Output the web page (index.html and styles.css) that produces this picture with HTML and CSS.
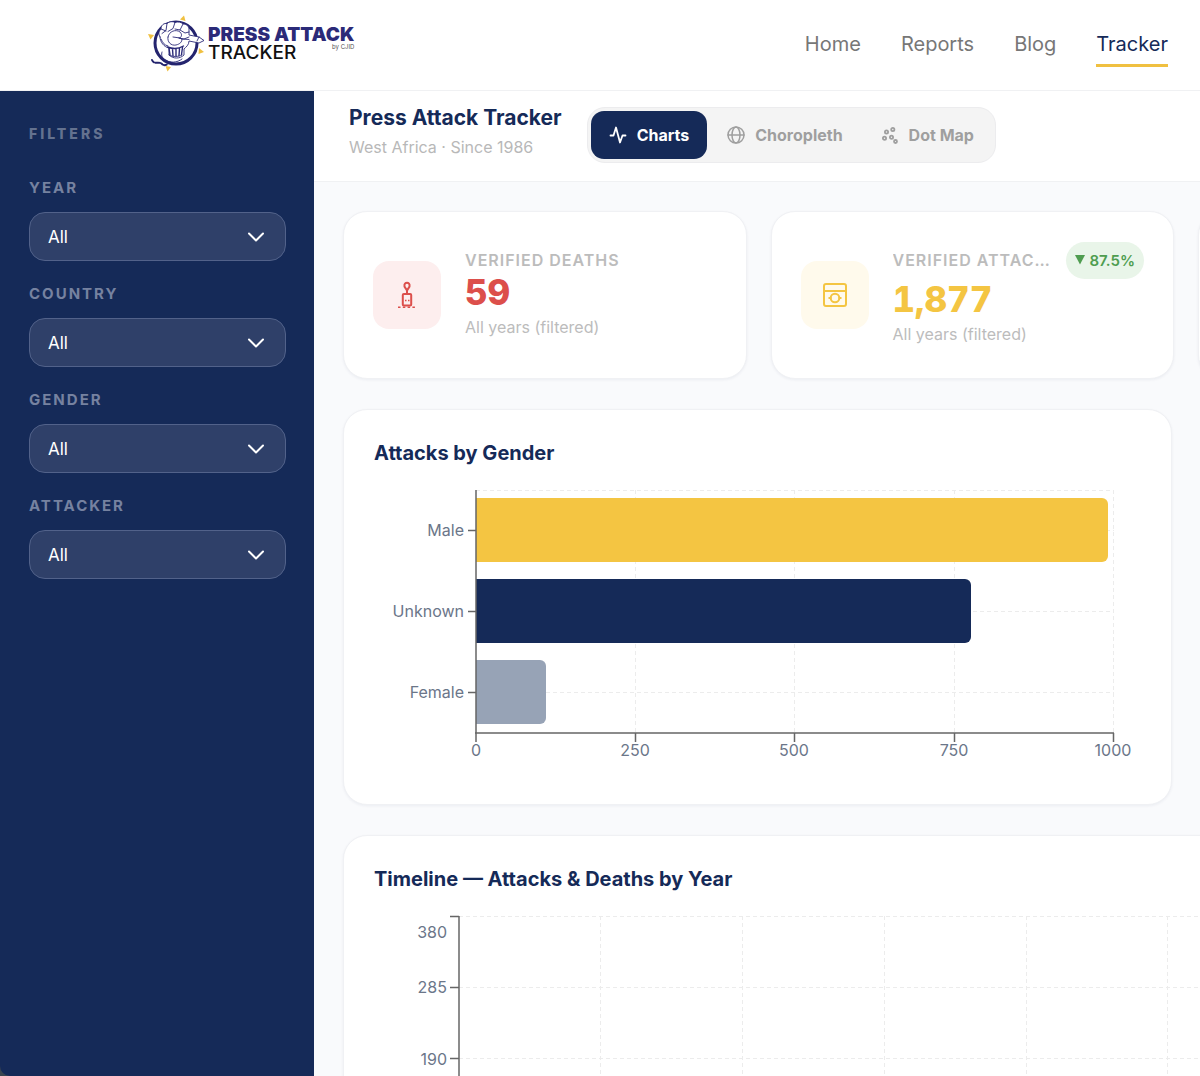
FILE: index.html
```html
<!DOCTYPE html>
<html lang="en">
<head>
    <meta charset="UTF-8">
    <meta name="viewport" content="width=device-width, initial-scale=1.0">
    <title>Press Attack Tracker</title>
    <link rel="stylesheet" href="styles.css">
</head>
<body>

<header class="site-header">
    <a class="logo" href="#" aria-label="Press Attack Tracker">
        <svg class="logo-mark" viewBox="0 0 58 58" width="58" height="58" fill="none" stroke-linecap="round" stroke-linejoin="round">
            <g fill="#f0c040">
                <path d="M36 .5l1.500 5.500l-5.500-1.500z"/>
                <path d="M0 19l6 1l-3.500 4.500z"/>
                <path d="M51 33l5 4l-5.500 2z"/>
                <path d="M17.500 51l5.500 1l-3.500 4.500z"/>
            </g>
            <circle cx="28" cy="28" r="21" stroke="#24246e" stroke-width="3"/>
            <g stroke="#2b2a78" stroke-width=".9">
                <path fill="#fff" d="M12 22c-2-3-1-6 1-8c0-4 3-6 6-5.500c2-2 6-2.500 8-1c3-1 6-.5 8 1.500c3 0 6 2 6 5v6l10 2l5 3.500l-5 2.500l-10-2c0 4-3 6-5 8v6c-4 4-11 4-15 0v-7c-5-1-9-6-9-11z"/>
                <path d="M19 8.500l-1 7l-4 3M27 7.500l-2 6l-5 3M35 9l-3 6l-5-1M13 14l5 2M32 15l5 3l4-1M51 22l-2 4"/>
                <path d="M20 22c1-6 8-8 12-5c2 2 2 4 0 6l-7-1M20 22c-1 5 3 9 8 8c4-1 6-3 6-6l-3-1M34 24l7 .5M13 24c2 4 3 6 7 7M31 23l5 1l5-2"/>
                <path stroke-width="1.400" d="M19.500 32c5 2 11 2 16-1M21 33l1 7M24.500 34l.5 7M28 34v7M31.500 33.500l-.5 7M34.500 32.500l-1 7"/>
                <path d="M21 40c4 2 9 2 13 0M14 37c-1 3 0 6 3 8c5 3 12 3 17-1"/>
            </g>
            <path stroke="#24246e" stroke-width="2" stroke-dasharray="3 1.500" d="M4 45c2 5 7 1 10 4c2 2 4 1 6 0"/>
        </svg>
        <span class="logo-text">
            <span class="logo-press">PRESS ATTACK</span>
            <span class="logo-row">
                <span class="logo-tracker">TRACKER</span>
                <small class="logo-by">by CJID</small>
            </span>
        </span>
    </a>
    <nav class="site-nav">
        <a href="#">Home</a>
        <a href="#">Reports</a>
        <a href="#">Blog</a>
        <a class="active" href="#">Tracker</a>
    </nav>
</header>

<div class="layout">
    <aside class="sidebar">
        <h2>Filters</h2>

        <div class="filter">
            <label for="year">Year</label>
            <div class="select-wrap">
                <select id="year"><option>All</option></select>
                <svg viewBox="0 0 18 18" width="18" height="18"><path d="M2 5.500l7 7l7-7"/></svg>
            </div>
        </div>
        <div class="filter">
            <label for="country">Country</label>
            <div class="select-wrap">
                <select id="country"><option>All</option></select>
                <svg viewBox="0 0 18 18" width="18" height="18"><path d="M2 5.500l7 7l7-7"/></svg>
            </div>
        </div>
        <div class="filter">
            <label for="gender">Gender</label>
            <div class="select-wrap">
                <select id="gender"><option>All</option></select>
                <svg viewBox="0 0 18 18" width="18" height="18"><path d="M2 5.500l7 7l7-7"/></svg>
            </div>
        </div>
        <div class="filter">
            <label for="attacker">Attacker</label>
            <div class="select-wrap">
                <select id="attacker"><option>All</option></select>
                <svg viewBox="0 0 18 18" width="18" height="18"><path d="M2 5.500l7 7l7-7"/></svg>
            </div>
        </div>
    </aside>

    <main class="main">
        <div class="topbar">
            <div class="topbar-title">
                <h1>Press Attack Tracker</h1>
                <p>West Africa · Since 1986</p>
            </div>
            <div class="tabs">
                <button class="tab active" type="button">
                    <svg viewBox="0 0 18 18" width="18" height="18" stroke-width="1.800"><path d="M1.500 9.500h3l2.500-8l4 15l2.500-7h3"/></svg>
                    Charts
                </button>
                <button class="tab" type="button">
                    <svg viewBox="0 0 18 18" width="18" height="18" stroke-width="1.500"><circle cx="9" cy="9" r="8"/><ellipse cx="9" cy="9" rx="4" ry="8"/><path d="M1 9h16"/></svg>
                    Choropleth
                </button>
                <button class="tab" type="button">
                    <svg viewBox="0 0 18 18" width="18" height="18" stroke-width="1.800"><circle cx="5.500" cy="6" r="1.600"/><circle cx="11.800" cy="3.500" r="1.600"/><circle cx="3.500" cy="12.300" r="1.600"/><circle cx="10.500" cy="11.300" r="1.600"/><circle cx="14.500" cy="15.500" r="1.500"/></svg>
                    Dot Map
                </button>
            </div>
        </div>

        <div class="content">
            <section class="kpis">
                <article class="card kpi kpi-red">
                    <div class="kpi-icon">
                        <svg viewBox="0 0 28 28" width="28" height="28" fill="none" stroke="currentColor" stroke-width="2"><path d="M14 9.500l-2.500-4c-1-5 6-5 5 0zM14 9v4"/><rect x="9.800" y="13" width="8.400" height="11.500" rx="1"/><path stroke-width="1.300" stroke-dasharray="1.500 1.500" d="M12 19.500h5"/><path stroke-width="1.500" stroke-dasharray="2.500 2.300" d="M5 26.300h17"/></svg>
                    </div>
                    <div class="kpi-body">
                        <div class="kpi-head"><h3>Verified Deaths</h3></div>
                        <div class="kpi-value">59</div>
                        <p>All years (filtered)</p>
                    </div>
                </article>
                <article class="card kpi kpi-yellow">
                    <div class="kpi-icon">
                        <svg viewBox="0 0 28 28" width="28" height="28" fill="none" stroke="currentColor" stroke-width="2"><rect x="3" y="3" width="22" height="22" rx="2"/><path d="M3 10h22M7.500 17h3M17.500 17h3"/><circle cx="14" cy="17" r="4.300"/></svg>
                    </div>
                    <div class="kpi-body">
                        <div class="kpi-head">
                            <h3>Verified Attacks</h3>
                            <span class="badge"><svg viewBox="0 0 10 10" width="10" height="10"><path d="M0 0h10L5 9.500z" fill="currentColor"/></svg>87.5%</span>
                        </div>
                        <div class="kpi-value">1,877</div>
                        <p>All years (filtered)</p>
                    </div>
                </article>
                <article class="card"></article>
            </section>

            <section class="charts">
                <article class="card chart">
                    <h2>Attacks by Gender</h2>
                    <svg class="plot" width="766" height="294">
                        <g class="grid">
                            <path d="M102 8.500h638M102 48.500h638M102 129.500h638M102 210.500h638"/>
                            <path d="M261.500 8v243M420.500 8v243M580.500 8v243M739.500 8v243"/>
                        </g>
                        <path fill="#f4c542" d="M102 16h626a6 6 0 0 1 6 6v52a6 6 0 0 1-6 6h-626z"/>
                        <path fill="#152a58" d="M102 97h489a6 6 0 0 1 6 6v52a6 6 0 0 1-6 6h-489z"/>
                        <path fill="#97a3b6" d="M102 178h64a6 6 0 0 1 6 6v52a6 6 0 0 1-6 6h-64z"/>
                        <g class="axis">
                            <path d="M102 8v252M101 251h639"/>
                            <path d="M94 48.500h8M94 129.500h8M94 210.500h8"/>
                            <path d="M261.500 251v9M420.500 251v9M580.500 251v9M739.500 251v9"/>
                        </g>
                        <g class="ticks ticks-y">
                            <text x="90" y="54">Male</text>
                            <text x="90" y="135">Unknown</text>
                            <text x="90" y="216">Female</text>
                        </g>
                        <g class="ticks ticks-x">
                            <text x="102" y="274">0</text>
                            <text x="261" y="274">250</text>
                            <text x="420" y="274">500</text>
                            <text x="580" y="274">750</text>
                            <text x="739" y="274">1000</text>
                        </g>
                    </svg>
                </article>
            </section>

            <article class="card chart">
                <h2>Timeline — Attacks &amp; Deaths by Year</h2>
                <svg class="plot" width="1622" height="360">
                    <g class="grid">
                        <path d="M85 8.500h1500M85 79.500h1500M85 150.500h1500M85 221.500h1500"/>
                        <path d="M226.500 8v284M368.500 8v284M510.500 8v284M652.500 8v284M793.500 8v284"/>
                    </g>
                    <g class="axis">
                        <path d="M85 8v284"/>
                        <path d="M76 8.500h9M76 79.500h9M76 150.500h9M76 221.500h9"/>
                    </g>
                    <g class="ticks ticks-y">
                        <text x="73" y="30">380</text>
                        <text x="73" y="85">285</text>
                        <text x="73" y="157">190</text>
                    </g>
                </svg>
            </article>
        </div>
    </main>
</div>

</body>
</html>
```
FILE: styles.css
```css
* {
    box-sizing: border-box;
}

body {
    margin: 0;
    height: 100vh;
    display: flex;
    flex-direction: column;
    overflow: hidden;
    font-family: Inter, "Liberation Sans", sans-serif;
    font-size: 16px;
    color: #152a58;
    background-color: #fff;
}

h1, h2, h3, p {
    margin: 0;
}

/* Header */
.site-header {
    display: flex;
    justify-content: space-between;
    align-items: center;
    height: 91px;
    flex-shrink: 0;
    padding: 0 32px 2px 148px;
    border-bottom: 1px solid #f0f1f3;
}

.logo {
    display: flex;
    align-items: center;
    gap: 2px;
    text-decoration: none;
}

.logo-text {
    display: flex;
    flex-direction: column;
    font-size: 19px;
    line-height: 18px;
}

.logo-press {
    font-weight: 900;
    color: #2b2a78;
}

.logo-row {
    display: flex;
    justify-content: space-between;
    align-items: flex-start;
}

.logo-tracker {
    font-weight: 500;
    color: #111;
}

.logo-by {
    font-size: 6px;
    line-height: 6px;
    color: #555;
}

.site-nav {
    display: flex;
    gap: 40px;
}

.site-nav a {
    padding: 9px 0 6px;
    border-bottom: 3px solid transparent;
    font-size: 20px;
    line-height: 28px;
    color: #777;
    text-decoration: none;
}

.site-nav a.active {
    color: #152a58;
    border-bottom-color: #f0c040;
}

.layout {
    display: flex;
    flex: 1;
    min-height: 0;
    background-color: #3a4650;
}

/* Sidebar filters */
.sidebar {
    flex: 0 0 314px;
    padding: 33px 28px 33px 29px;
    background-color: #152a58;
    border-bottom-left-radius: 10px;
}

.sidebar h2 {
    margin-bottom: 34px;
    font-size: 14px;
    line-height: 20px;
    font-weight: 800;
    letter-spacing: 3px;
    text-transform: uppercase;
    color: #64728f;
}

.filter {
    margin-bottom: 23px;
}

.filter label {
    display: block;
    margin-bottom: 14px;
    font-size: 15px;
    line-height: 20px;
    font-weight: 700;
    letter-spacing: 2px;
    text-transform: uppercase;
    color: #7682a0;
}

.select-wrap {
    position: relative;
}

.select-wrap select {
    display: block;
    width: 100%;
    height: 49px;
    padding: 0 18px;
    appearance: none;
    border: 1px solid #52628a;
    border-radius: 16px;
    background-color: #2f4069;
    color: #fff;
    font-family: inherit;
    font-size: 17px;
}

.select-wrap svg {
    position: absolute;
    right: 21px;
    top: 16px;
    fill: none;
    stroke: #fff;
    stroke-width: 2;
    stroke-linecap: round;
    stroke-linejoin: round;
    pointer-events: none;
}

/* Main column */
.main {
    flex: 1;
    min-width: 0;
    overflow: hidden;
    background-color: #f9fafc;
}

.topbar {
    display: flex;
    align-items: center;
    gap: 25px;
    height: 91px;
    padding: 0 35px 2px;
    background-color: #fff;
    border-bottom: 1px solid #f0f1f3;
}

.topbar-title {
    padding-bottom: 6px;
}

.topbar h1 {
    font-size: 21px;
    line-height: 30px;
    font-weight: 700;
}

.topbar p {
    font-size: 16px;
    line-height: 28px;
    color: #b8b8b8;
}

.tabs {
    display: flex;
    gap: 2px;
    padding: 3px;
    border: 1px solid #ececee;
    border-radius: 18px;
    background-color: #f4f4f4;
}

.tab {
    display: flex;
    align-items: center;
    gap: 10px;
    height: 48px;
    padding: 0 18px;
    border: none;
    border-radius: 13px;
    background: none;
    font-family: inherit;
    font-size: 16px;
    font-weight: 700;
    color: #9f9f9f;
    cursor: pointer;
}

.tab svg {
    fill: none;
    stroke: currentColor;
    stroke-linecap: round;
    stroke-linejoin: round;
}

.tab.active {
    background-color: #152a58;
    color: #fff;
}

/* The dashboard is wider than small windows, the rest is cut off */
.content {
    display: flex;
    flex-direction: column;
    gap: 30px;
    min-width: 1744px;
    padding: 29px;
}

.card {
    border: 1px solid #f0f1f4;
    border-radius: 24px;
    background-color: #fff;
    box-shadow: 0 1px 3px rgba(20, 40, 90, 0.06);
}

/* KPI cards */
.kpis {
    display: grid;
    grid-template-columns: repeat(4, minmax(0, 1fr));
    gap: 24px;
}

.kpi {
    display: flex;
    align-items: center;
    gap: 24px;
    min-height: 168px;
    padding: 29px;
}

.kpi-icon {
    display: flex;
    align-items: center;
    justify-content: center;
    flex: 0 0 68px;
    height: 68px;
    border-radius: 16px;
}

.kpi-body {
    flex: 1;
    min-width: 0;
}

.kpi-head {
    display: flex;
    align-items: center;
    gap: 14px;
}

.kpi-head h3 {
    flex: 1;
    min-width: 0;
    overflow: hidden;
    text-overflow: ellipsis;
    white-space: nowrap;
    font-size: 16px;
    line-height: 24px;
    font-weight: 600;
    letter-spacing: 1px;
    text-transform: uppercase;
    color: #bcbcbc;
}

.kpi-value {
    font-size: 35px;
    line-height: 40px;
    font-weight: 800;
    font-variant-numeric: tabular-nums;
}

.kpi-body p {
    font-size: 16px;
    line-height: 30px;
    color: #bcbcbc;
}

.kpi-red .kpi-icon {
    background-color: #fdeeee;
}

.kpi-red .kpi-icon,
.kpi-red .kpi-value {
    color: #dc4f4b;
}

.kpi-yellow .kpi-icon {
    background-color: #fffaec;
}

.kpi-yellow .kpi-icon,
.kpi-yellow .kpi-value {
    color: #f4c542;
}

.badge {
    display: flex;
    align-items: center;
    gap: 4px;
    height: 37px;
    padding: 0 9px;
    border-radius: 19px;
    background-color: #e9f5e9;
    font-size: 15px;
    font-weight: 600;
    color: #4f9d50;
}

/* Charts */
.charts {
    display: grid;
    grid-template-columns: repeat(2, minmax(0, 1fr));
    gap: 28px;
}

.chart {
    padding: 28px 30px;
}

.chart h2 {
    margin-bottom: 14px;
    font-size: 20px;
    line-height: 30px;
    font-weight: 700;
}

.plot {
    display: block;
}

.grid path {
    fill: none;
    stroke: #ececec;
    stroke-dasharray: 4 3;
}

.axis path {
    fill: none;
    stroke: #666;
    stroke-width: 1.5;
}

.ticks {
    font-size: 16px;
    fill: #6b7689;
}

.ticks-y {
    text-anchor: end;
}

.ticks-x {
    text-anchor: middle;
}
```
